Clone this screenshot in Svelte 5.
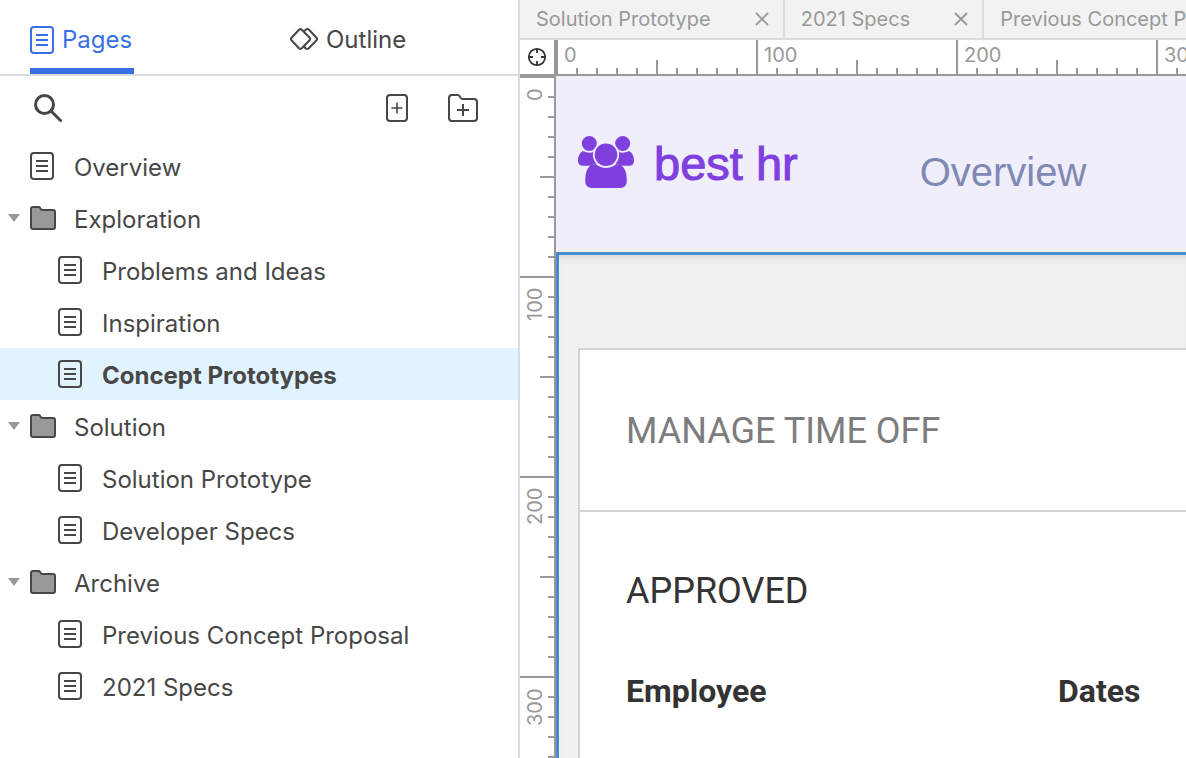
<script>
  let activePane = $state('pages');
  let selected = $state('Concept Prototypes');
  let collapsed = $state({});

  const tree = [
    { name: 'Overview' },
    { name: 'Exploration', pages: ['Problems and Ideas', 'Inspiration', 'Concept Prototypes'] },
    { name: 'Solution', pages: ['Solution Prototype', 'Developer Specs'] },
    { name: 'Archive', pages: ['Previous Concept Proposal', '2021 Specs'] },
  ];

  let openTabs = $state(['Solution Prototype', '2021 Specs', 'Previous Concept Proposal']);
  const closeTab = (name) => (openTabs = openTabs.filter((t) => t !== name));

  // ruler labels, one per 100 units (200px), as many as the canvas has room for
  let canvasW = $state(0);
  let canvasH = $state(0);
  const marks = (size) => Array.from({ length: Math.ceil(size / 200) }, (_, i) => i * 100);
</script>

{#snippet pageIcon()}
  <svg class="icon" width="24" height="28" viewBox="0 0 24 28" fill="none" stroke="currentColor" stroke-width="2" aria-hidden="true">
    <rect x="1" y="1" width="22" height="26" rx="3" />
    <path d="M6 9H18M6 14H18M6 19H18" />
  </svg>
{/snippet}

{#snippet pageLink(name)}
  <a class="row" class:selected={selected === name} href="#{name.replaceAll(' ', '-')}" onclick={() => (selected = name)}>
    {@render pageIcon()}
    <span>{name}</span>
  </a>
{/snippet}

<div class="app">
  <aside class="sidebar">
    <div class="panes" role="tablist">
      <button class="pane" class:active={activePane === 'pages'} role="tab" aria-selected={activePane === 'pages'} onclick={() => (activePane = 'pages')}>
        {@render pageIcon()}
        Pages
      </button>
      <button class="pane" class:active={activePane === 'outline'} role="tab" aria-selected={activePane === 'outline'} onclick={() => (activePane = 'outline')}>
        <svg class="icon" width="28" height="24" viewBox="0 0 28 24" fill="none" stroke="currentColor" stroke-width="2" stroke-linejoin="round" aria-hidden="true">
          <path d="M9 1.7Q10.4 .5 11.8 1.7L19.6 9.7Q20.6 11 19.6 12.3L11.8 20.3Q10.4 21.6 9 20.3L1.5 12.3Q.5 11 1.5 9.7Z" />
          <path d="M14.2 3.2L15.8 1.7Q17.5 .5 19 1.7L26.5 9.7Q27.5 11 26.5 12.3L18.8 20.3Q17.2 21.6 15.6 20.3L14.2 18.8" />
        </svg>
        Outline
      </button>
    </div>

    <div class="tools">
      <button class="tool" aria-label="Search">
        <svg width="28" height="28" viewBox="0 0 28 28" fill="none" stroke="currentColor" aria-hidden="true">
          <circle cx="10.5" cy="10.5" r="9" stroke-width="3" />
          <path d="M17 17L26.5 26.5" stroke-width="3" stroke-linecap="round" />
        </svg>
      </button>
      <button class="tool add" aria-label="Add page">
        <svg width="22" height="28" viewBox="0 0 22 28" fill="none" stroke="currentColor" stroke-width="2" aria-hidden="true">
          <rect x="1" y="1" width="20" height="26" rx="3" />
          <path d="M5.5 14H16.5M11 8.5V19.5" stroke-width="1.6" />
        </svg>
      </button>
      <button class="tool" aria-label="Add folder">
        <svg width="30" height="28" viewBox="0 0 30 28" fill="none" stroke="currentColor" stroke-width="2" stroke-linejoin="round" aria-hidden="true">
          <path d="M4 1H9.5Q11 1 11.8 2.4L12.6 3.9Q13.2 5 14.5 5H26Q29 5 29 8V24Q29 27 26 27H4Q1 27 1 24V4Q1 1 4 1Z" />
          <path d="M9 16H21M15 10V22" />
        </svg>
      </button>
    </div>

    <ul class="tree">
      {#each tree as item}
        <li>
          {#if item.pages}
            <button class="row folder" aria-expanded={!collapsed[item.name]} onclick={() => (collapsed[item.name] = !collapsed[item.name])}>
              <svg class="arrow" class:closed={collapsed[item.name]} width="12" height="8" viewBox="0 0 12 8" aria-hidden="true"><path d="M0 0H12L6 8Z" fill="#999" /></svg>
              <svg class="icon" width="26" height="24" viewBox="0 0 26 24" fill="#999" stroke="currentColor" stroke-width="2" stroke-linejoin="round" aria-hidden="true">
                <path d="M3 1H8.6Q9.6 1 10.2 2L11 3.2Q11.5 4 12.5 4H23Q25 4 25 6V21Q25 23 23 23H3Q1 23 1 21V3Q1 1 3 1Z" />
              </svg>
              <span>{item.name}</span>
            </button>
            {#if !collapsed[item.name]}
              <ul class="children">
                {#each item.pages as name}
                  <li>{@render pageLink(name)}</li>
                {/each}
              </ul>
            {/if}
          {:else}
            {@render pageLink(item.name)}
          {/if}
        </li>
      {/each}
    </ul>
  </aside>

  <main class="editor">
    <div class="tabs">
      {#each openTabs as name}
        <div class="tab">
          <button class="tab-name">{name}</button>
          <button class="close" aria-label="Close {name}" onclick={() => closeTab(name)}>
            <svg width="14" height="14" viewBox="0 0 14 14" stroke="currentColor" stroke-width="1.8" aria-hidden="true"><path d="M1 1L13 13M13 1L1 13" /></svg>
          </button>
        </div>
      {/each}
    </div>

    <div class="workspace">
      <button class="origin" aria-label="Return to origin">
        <svg width="20" height="20" viewBox="0 0 20 20" fill="none" stroke="#333" stroke-width="1.8" aria-hidden="true">
          <circle cx="10" cy="10" r="8.2" />
          <path d="M10 2V6M10 14V18M2 10H6M14 10H18" />
        </svg>
      </button>
      <div class="ruler ruler-x">
        {#each marks(canvasW) as m}<span>{m}</span>{/each}
      </div>
      <div class="ruler ruler-y">
        {#each marks(canvasH) as m}<span>{m}</span>{/each}
      </div>

      <div class="canvas" bind:clientWidth={canvasW} bind:clientHeight={canvasH}>
        <header class="site-header">
          <svg class="people" width="56" height="52" viewBox="0 0 56 52" fill="#8040df" aria-hidden="true">
            <circle cx="11.3" cy="7.5" r="7.5" />
            <circle cx="44.7" cy="7.5" r="7.5" />
            <path d="M5 15Q11.5 18.5 16.3 15.3Q14.7 22.5 19.5 27.5Q15 28 13.5 29.7H5Q0 29.7 0 25Q0 17.5 5 15Z" />
            <path d="M51 15Q44.5 18.5 39.7 15.3Q41.3 22.5 36.5 27.5Q41 28 42.5 29.7H51Q56 29.7 56 25Q56 17.5 51 15Z" />
            <path d="M17.5 28Q28 35.5 38.5 28Q48.8 28.5 48.8 45Q48.8 52 42 52H14Q7.2 52 7.2 45Q7.2 28.5 17.5 28Z" />
            <circle cx="28" cy="18.7" r="12.2" stroke="#f0eefa" stroke-width="1.8" />
          </svg>
          <span class="brand">best hr</span>
          <a class="nav-link" href="#overview">Overview</a>
        </header>
        <div class="frame">
          <section class="card">
            <h2>MANAGE TIME OFF</h2>
            <div class="card-body">
              <h3>APPROVED</h3>
              <table>
                <thead>
                  <tr><th>Employee</th><th>Dates</th></tr>
                </thead>
              </table>
            </div>
          </section>
        </div>
      </div>
    </div>
  </main>
</div>

<style>
  :global(body) { margin: 0; }
  button { padding: 0; border: 0; background: none; font: inherit; color: inherit; cursor: pointer; }
  a { color: inherit; text-decoration: none; }
  ul { margin: 0; padding: 0; list-style: none; }
  svg { display: block; flex: none; }

  .app {
    display: grid;
    grid-template-columns: 520px minmax(0, 1fr);
    height: 100vh;
    overflow: hidden;
    font: 24px/28px Inter, sans-serif;
    color: #474747;
    background: #fff;
  }

  .sidebar { border-right: 2px solid #dcdcdc; overflow: hidden; }
  .panes { display: grid; grid-template-columns: 1fr 1fr; justify-items: start; height: 74px; padding-left: 30px; column-gap: 32px; border-bottom: 2px solid #dcdcdc; }
  .pane { display: flex; align-items: center; gap: 8px; padding: 12px 2px 0 0; border-bottom: 6px solid transparent; white-space: nowrap; }
  .pane.active { color: #386fe5; border-color: #386fe5; }

  .tools { display: flex; align-items: center; height: 64px; padding: 0 40px 0 34px; }
  .tool { color: #474747; }
  .add { margin: 0 40px 0 auto; }

  .row { box-sizing: border-box; display: flex; align-items: center; width: 100%; height: 52px; padding-left: 30px; text-align: left; white-space: nowrap; }
  .row .icon { margin-right: 20px; }
  .row span { padding-top: 4px; }
  .children .row { padding-left: 58px; }
  .row.folder { padding-left: 8px; }
  .folder .icon { margin-right: 18px; }
  .arrow { margin-right: 10px; }
  .arrow.closed { transform: rotate(-90deg); }
  .selected { background: #e1f3fe; font-weight: 700; }

  .editor { display: flex; flex-direction: column; min-width: 0; min-height: 0; }
  .tabs { display: flex; height: 38px; background: #f2f2f2; border-bottom: 2px solid #dcdcdc; overflow: hidden; font-size: 20px; color: #999; }
  .tab { display: flex; flex: none; align-items: center; gap: 44px; padding: 0 14px 0 16px; border-right: 2px solid #dcdcdc; }
  .tab-name { white-space: nowrap; }

  .workspace { display: grid; grid-template: 36px minmax(0, 1fr) / 36px minmax(0, 1fr); flex: 1; min-height: 0; }
  .origin { display: grid; place-items: center; border: solid #999; border-width: 0 2px 2px 0; }
  .ruler { display: flex; overflow: hidden; font-size: 20px; line-height: 20px; color: #999; }
  .ruler span { box-sizing: border-box; flex: none; }
  .ruler-x {
    border-bottom: 2px solid #999;
    background:
      linear-gradient(to right, #999 2px, transparent 2px) 0 0 / 200px 34px repeat-x,
      linear-gradient(to right, #999 2px, transparent 2px) 0 100% / 100px 14px repeat-x,
      linear-gradient(to right, #999 2px, transparent 2px) 0 100% / 20px 6px repeat-x;
  }
  .ruler-x span { width: 200px; padding: 5px 0 0 8px; }
  .ruler-y {
    flex-direction: column;
    border-right: 2px solid #999;
    background:
      linear-gradient(#999 2px, transparent 2px) 0 0 / 34px 200px repeat-y,
      linear-gradient(#999 2px, transparent 2px) 100% 0 / 14px 100px repeat-y,
      linear-gradient(#999 2px, transparent 2px) 100% 0 / 6px 20px repeat-y;
  }
  .ruler-y span { width: 30px; height: 200px; padding: 0 5px 12px 0; writing-mode: vertical-rl; text-align: right; transform: rotate(180deg); }

  .canvas { display: flex; flex-direction: column; overflow: hidden; background: #f1f1f1; }
  .site-header { display: flex; flex: none; align-items: center; height: 176px; padding-left: 22px; background: #f0eefa; font-family: "Liberation Sans", Arial, sans-serif; }
  .people { margin-bottom: 4px; }
  .brand, .nav-link { line-height: 52px; white-space: nowrap; }
  .brand { margin-left: 20px; font-size: 47px; color: #8040df; -webkit-text-stroke: 1px currentColor; }
  .nav-link { margin-left: 122px; padding-top: 16px; font-size: 40px; color: #7f89b4; }
  .frame { flex: 1; padding: 93px 0 0 19px; border: solid #458bcf; border-width: 3px 0 0 3px; box-shadow: inset 0 6px 6px -3px #d8d8d8; }
  .card { box-sizing: border-box; min-height: 100%; border: solid #d3d3d3; border-width: 2px 0 0 2px; background: #fff; font-family: Roboto, sans-serif; }
  .card h2, .card h3 { margin: 0; font-size: 36px; line-height: 40px; font-weight: 400; }
  .card h2 { padding: 61px 46px 59px; border-bottom: 2px solid #d3d3d3; color: #7d7d7d; }
  .card-body { padding: 59px 46px; color: #333; }
  table { width: 100%; min-width: 864px; margin-top: 60px; border-collapse: collapse; table-layout: fixed; }
  th { padding: 0; font-size: 32px; line-height: 40px; font-weight: 700; text-align: left; }
</style>
